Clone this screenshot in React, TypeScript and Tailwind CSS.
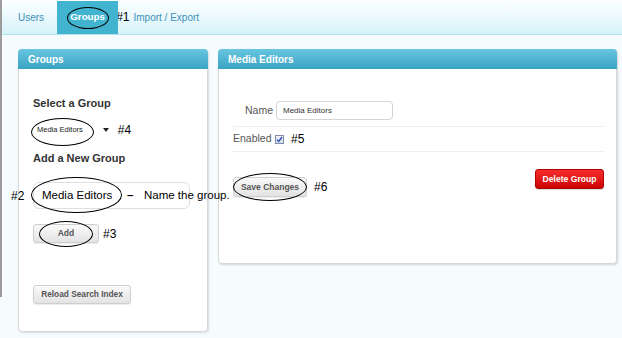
import React from "react";

function Ellipse({ className }: { className: string }) {
  return (
    <span
      className={
        "pointer-events-none absolute rounded-[50%] border-[1.5px] border-black " +
        className
      }
    />
  );
}

function GrayButton({
  children,
  className,
}: {
  children: React.ReactNode;
  className: string;
}) {
  return (
    <div
      className={
        "flex items-center justify-center rounded-[3px] border border-[#cfcfcf] bg-gradient-to-b from-[#fafafa] to-[#e3e3e3] font-bold text-[#555] shadow-[0_1px_1px_rgba(0,0,0,0.08)] " +
        className
      }
    >
      {children}
    </div>
  );
}

export default function App() {
  return (
    <div className="relative h-[338px] w-[622px] overflow-hidden bg-[#f6fbfd] font-['Liberation_Sans',Arial,sans-serif]">
      <div className="absolute left-0 top-0 z-10 h-[297px] w-[2px] bg-[#9c9c9c]" />
      {/* top nav */}
      <nav className="flex h-[35px] items-stretch border-b border-[#b3e3ef] bg-gradient-to-b from-[#fdffff] to-[#d6f3fa] text-[10px]">
        <span className="ml-[18px] self-center text-[#3f8fb6]">Users</span>
        <div className="relative ml-[13px] mt-[1px] flex w-[61px] items-center justify-center bg-[#42b4cf] text-[9.8px] font-bold text-white">
          Groups
          <Ellipse className="left-[10px] top-[6px] h-[22px] w-[42px]" />
        </div>
        <span className="ml-[-2px] self-center text-[12px] text-black">#1</span>
        <span className="ml-[4px] self-center text-[#3f8fb6]">Import / Export</span>
      </nav>

      <div className="flex items-start gap-[10px] pl-[18px] pt-[14px]">
        {/* left panel */}
        <section className="h-[283px] w-[190px] rounded-[4px] border border-[#d8d8d8] bg-white shadow-[1px_1px_2px_rgba(0,0,0,0.12)]">
          <header className="-mx-px -mt-px flex h-[20px] items-center rounded-t-[4px] bg-gradient-to-b from-[#68c6e0] to-[#37a3c3] pl-[10px] text-[10px] font-bold text-white">
            Groups
          </header>
          <div className="pl-[14px]">
            <div className="mt-[28px] h-[13px] text-[11px] font-bold leading-[13px] text-[#333]">
              Select a Group
            </div>
            <div className="relative mt-[12px] flex h-[16px] items-center">
              <span className="ml-[4px] text-[7.5px] text-[#222]">Media Editors</span>
              <span className="ml-[20px] h-0 w-0 border-x-[3px] border-t-[4px] border-x-transparent border-t-[#222]" />
              <span className="ml-[9px] text-[12px] text-black">#4</span>
              <Ellipse className="left-[-2px] top-[-4px] h-[28px] w-[63px]" />
            </div>
            <div className="mt-[14px] h-[13px] text-[11px] font-bold leading-[13px] text-[#333]">
              Add a New Group
            </div>
            <div className="relative z-20 mt-[17px] flex h-[27px] w-[157px] items-center rounded-[6px] border border-[#dedede] bg-white pl-[8px] text-[11.5px] text-black">
              Media Editors
              <span className="absolute left-[-23px] text-[12px]">#2</span>
              <span className="absolute left-[93px] font-bold">–</span>
              <span className="absolute left-[110px] whitespace-nowrap">Name the group.</span>
              <Ellipse className="left-[-3px] top-[-6px] h-[36px] w-[91px]" />
            </div>
            <div className="relative mt-[15px] flex items-center">
              <GrayButton className="h-[19px] w-[66px] text-[8.5px]">Add</GrayButton>
              <span className="ml-[4px] text-[12px] text-black">#3</span>
              <Ellipse className="left-[6px] top-[-3px] h-[26px] w-[54px]" />
            </div>
            <GrayButton className="mt-[42px] h-[19px] w-[98px] text-[8.3px]">
              Reload Search Index
            </GrayButton>
          </div>
        </section>

        {/* right panel */}
        <section className="h-[215px] w-[399px] rounded-[4px] border border-[#d8d8d8] bg-white shadow-[1px_1px_2px_rgba(0,0,0,0.15)]">
          <header className="-mx-px -mt-px flex h-[20px] items-center rounded-t-[4px] bg-gradient-to-b from-[#68c6e0] to-[#37a3c3] pl-[10px] text-[10px] font-bold text-white">
            Media Editors
          </header>
          <div className="pl-[14px] pr-[12px]">
            <div className="mt-[32px] flex h-[19px] items-center">
              <span className="ml-[12px] w-[31px] text-[10.5px] text-[#555]">Name</span>
              <div className="flex h-[19px] w-[117px] items-center rounded-[4px] border border-[#d4d4d4] pl-[6px] text-[8px] text-[#333]">
                Media Editors
              </div>
            </div>
            <div className="mt-[6px] h-px bg-[#eeeeee]" />
            <div className="mt-[6px] flex h-[12px] items-center">
              <span className="w-[42px] text-[10.5px] text-[#555]">Enabled</span>
              <span className="flex h-[9px] w-[9px] items-center justify-center border border-[#7d8ea6] bg-gradient-to-b from-[#eef2f8] to-[#d6deea]">
                <svg width="7" height="7" viewBox="0 0 7 7">
                  <path d="M1 3.6 L2.7 5.4 L6 1" fill="none" stroke="#2a4db0" strokeWidth="1.3" />
                </svg>
              </span>
              <span className="ml-[7px] text-[12px] text-black">#5</span>
            </div>
            <div className="mt-[6px] h-px bg-[#eeeeee]" />
            <div className="mt-[17px] flex items-start">
              <div className="relative mt-[8px] flex items-center">
                <GrayButton className="h-[20px] w-[74px] text-[8.5px]">Save Changes</GrayButton>
                <span className="ml-[7px] text-[12px] text-black">#6</span>
                <Ellipse className="left-[0px] top-[-4px] h-[28px] w-[74px]" />
              </div>
              <div className="ml-auto flex h-[20px] w-[69px] items-center justify-center rounded-[3px] border border-[#b00000] bg-gradient-to-b from-[#f62a2a] to-[#cc0000] text-[8.6px] font-bold text-white shadow-[0_1px_1px_rgba(0,0,0,0.15)]">
                Delete Group
              </div>
            </div>
          </div>
        </section>
      </div>
    </div>
  );
}
